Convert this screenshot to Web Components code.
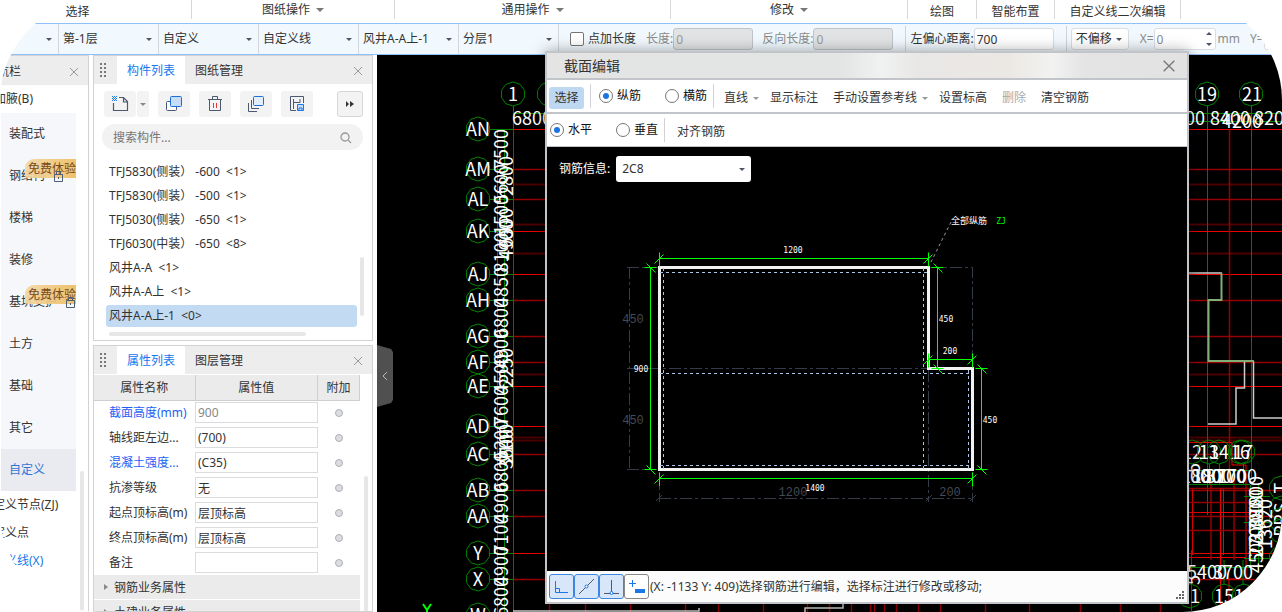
<!DOCTYPE html>
<html lang="zh-CN">
<head>
<meta charset="utf-8">
<meta name="viewport" content="width=device-width, initial-scale=1">
<title>截面编辑</title>
<style>
  html, body { margin: 0; height: 100%; background: #fff; }
  body { font: 12px/16px "Noto Sans", "Noto Sans CJK SC", sans-serif; color: #333; overflow: hidden; }
</style>
</head>
<body>
<cad-app></cad-app>
<script>
const BASE = `*{box-sizing:border-box} button,input,select{font:inherit;color:inherit;margin:0} button{border:0;background:none;padding:0} p,h2,ul{margin:0;padding:0;font:inherit;list-style:none}`;

function define(name, css, html, setup) {
  const template = document.createElement('template');
  template.innerHTML = `<style>${BASE}${css}</style>${typeof html === 'string' ? html : ''}`;
  customElements.define(name, class extends HTMLElement {
    constructor() {
      super();
      this.attachShadow({ mode: 'open' }).append(template.content.cloneNode(true));
    }
    connectedCallback() {
      if (this.ready) return;
      this.ready = true;
      if (typeof html === 'function') this.shadowRoot.innerHTML += html(this);
      if (setup) setup(this);
    }
  });
}

/* Small building blocks */
define('caret-down', `:host{display:inline-block;width:0;height:0;border:3px solid transparent;border-top-color:var(--caret,#4b5563);border-bottom:0;flex:none}
  :host([big]){border-width:4px;border-bottom:0;--caret:#777}`, '');

define('bar-line', `:host{display:block;width:1px;flex:none;background:#cfd3d8;align-self:stretch}`, '');

define('close-button', `:host{display:block;width:12px;height:12px;color:#999} button,svg{display:block;width:100%;height:100%}`,
  `<button type="button" aria-label="关闭"><svg viewBox="0 0 12 12" fill="none" stroke="currentColor"><path d="M2 2l8 8M10 2l-8 8"/></svg></button>`);

define('drop-field', `:host{display:flex;position:relative;align-items:center;min-width:0}
  select{appearance:none;border:0;background:none;outline:0;width:100%;height:100%;padding:0 12px 0 4px}
  caret-down{position:absolute;right:6px;pointer-events:none}`,
  host => `<select aria-label="${host.getAttribute('label')}"><option>${host.getAttribute('value')}</option></select><caret-down></caret-down>`);

define('text-field', `:host{display:flex;align-items:center;flex:none}
  label{white-space:nowrap} input{width:80px;height:22px;border:1px solid #d9dde2;border-radius:3px;background:#fff;padding:0 2px;outline:0}
  :host([off]){color:#8b8b8b} :host([off]) input{background:#e2e3e4;border-color:#bfc4cb;color:#999}
  :host([spin]) input{width:62px} .spin{display:none} :host([spin]){position:relative;color:#8b8b8b}
  :host([spin]) .spin{display:grid;gap:8px;position:absolute;right:4px}
  .up{transform:rotate(180deg)}`,
  host => `<label for="f">${host.getAttribute('label')}</label><input id="f" value="${host.getAttribute('value') || ''}" ${host.hasAttribute('off') ? 'disabled' : ''}><span class="spin"><caret-down class="up"></caret-down><caret-down></caret-down></span>`);

define('radio-item', `:host{display:block} label{display:flex;align-items:center;gap:4px;color:#111}
  input{appearance:none;width:14px;height:14px;border:1px solid #777;border-radius:50%;background:#fff;display:grid;place-items:center}
  input:checked::after{content:"";width:6px;height:6px;border-radius:50%;background:#1d74e0}`,
  host => `<label><input type="radio" ${host.hasAttribute('checked') ? 'checked' : ''}><span><slot></slot></span></label>`);

define('free-badge', `:host{display:block;width:51px;height:19px;padding:1px 0 0 3px;overflow:hidden;white-space:nowrap;border-radius:9px 0 0 4px;background:linear-gradient(90deg,#f4d7a4,#eebe63);color:#6e3d0c;line-height:17px;opacity:.93}`, '<slot></slot>');

define('lock-icon', `:host{display:block;width:9px;height:12px} svg{display:block}`,
  `<svg width="9" height="12" fill="none" stroke="#4e5d78"><path d="M.5 4.500h8v7h-8zM2.500 4V1.500h4V4"/><path d="M4.500 7v2"/></svg>`);

/* Ribbon captions */
define('ribbon-groups', `:host{display:grid;grid-template-columns:192fr 203fr 276fr 237fr 69fr 78fr 126fr 101fr;height:23px;background:#fff}
  div{display:flex;align-items:center;justify-content:center;gap:6px;height:19px;border-right:1px solid #d8d8d8;padding-top:4px;white-space:nowrap}
  div.menu{padding-top:0} div:first-of-type{padding-right:36px} div:last-child{border:0}`,
  `<div>选择</div><div class="menu">图纸操作<caret-down big></caret-down></div><div class="menu">通用操作<caret-down big></caret-down></div><div class="menu">修改<caret-down big></caret-down></div><div>绘图</div><div>智能布置</div><div>自定义线二次编辑</div><div></div>`);

define('option-bar', `:host{display:flex;align-items:center;height:32px;background:#f1f9fe;border:solid #8fc0f7;border-width:1px 0;overflow:hidden}
  .pick{width:100px;height:30px;flex:none;border-right:1px solid #d3d7dc} .pick:first-of-type{width:59px}
  label{display:flex;align-items:center;gap:4px;margin:0 10px 0 11px;flex:none}
  input{appearance:none;width:14px;height:14px;margin:0;border:1px solid #777;border-radius:2px;background:#fff}
  .gap{margin-right:9px} bar-line{height:26px;align-self:center;margin:0 4px 0 12px}
  .shift{width:58px;height:22px;flex:none;border:1px solid #d9dde2;border-radius:3px;background:#fff;margin-right:11px}
  .mm{color:#8b8b8b;margin:0 10px 0 2px}`,
  `<drop-field class="pick" label="工程" value=""></drop-field><drop-field class="pick" label="楼层" value="第-1层"></drop-field><drop-field class="pick" label="类别" value="自定义"></drop-field><drop-field class="pick" label="类型" value="自定义线"></drop-field><drop-field class="pick" label="构件" value="风井A-A上-1"></drop-field><drop-field class="pick" label="分层" value="分层1"></drop-field>
  <label><input type="checkbox">点加长度</label>
  <text-field class="gap" off label="长度:" value="0"></text-field><text-field off label="反向长度:" value="0"></text-field>
  <bar-line></bar-line><text-field label="左偏心距离:" value="700"></text-field>
  <bar-line></bar-line><drop-field class="shift" label="偏移" value="不偏移"></drop-field>
  <text-field spin label="X=" value="0"></text-field><span class="mm">mm</span><text-field spin label="Y=" value=""></text-field>`);

/* Module navigation, scrolled sideways under the window edge */
define('side-nav', `:host{display:block;width:89px;border-right:1px solid #d2d2d4;overflow:hidden;background:#fff;position:relative}
  .in{margin-left:-19px}
  header{display:flex;align-items:center;justify-content:space-between;height:30px;border-top:1px solid #d4d4d6;background:#ededee;padding:2px 8px 0 4px}
  .in>p{height:28px;line-height:28px;padding-left:13px}
  ul{margin-left:20px;width:75px;background:#f5f7fa}
  li{position:relative;height:42px;line-height:42px;padding-left:8px;white-space:nowrap;overflow:hidden}
  li.on{background:#e9ebf0} a{color:inherit;text-decoration:none} li.on a{color:#3375d6}
  free-badge{position:absolute;right:0;top:4px} lock-icon{position:absolute;top:15px;left:53px} .far{left:65px}
  .sub a{display:block;height:28px;line-height:28px;white-space:nowrap} .sub a.on{color:#1677e8}
  i{position:absolute;right:4px;bottom:0;width:4px;height:141px;border-radius:2px;background:#e7e7e8}`,
  `<div class="in"><header><span>导航栏</span><close-button></close-button></header><p>加腋(B)</p>
  <ul><li><a href="#">装配式</a></li><li><a href="#">钢结构</a><free-badge>免费体验</free-badge><lock-icon></lock-icon></li><li><a href="#">楼梯</a></li><li><a href="#">装修</a></li><li><a href="#">基坑支护</a><free-badge>免费体验</free-badge><lock-icon class="far"></lock-icon></li><li><a href="#">土方</a></li><li><a href="#">基础</a></li><li><a href="#">其它</a></li><li class="on"><a href="#">自定义</a></li></ul>
  <nav class="sub"><a href="#">自定义节点(ZJ)</a><a href="#">自定义点</a><a href="#" class="on">自定义线(X)</a></nav></div><i></i>`);

define('dock-panel', `:host{display:block;border:1px solid #d2d2d4;background:#fff;overflow:hidden;position:relative}
  header{display:flex;align-items:stretch;height:28px;background:#ededee}
  .grip{width:23px;display:grid;place-items:center;padding-right:6px}
  .tab{padding:1px 10px 0} .tab.on{background:#fff;color:#1677ee} close-button{margin:9px 8px 0 auto}`,
  host => `<header><span class="grip"><svg width="6" height="14" fill="#777"><path d="M0 0h2v2H0zM4 0h2v2H4zM0 4h2v2H0zM4 4h2v2H4zM0 8h2v2H0zM4 8h2v2H4zM0 12h2v2H0zM4 12h2v2H4z"/></svg></span><button class="tab on" type="button">${host.getAttribute('tab')}</button><button class="tab" type="button">${host.getAttribute('other')}</button><close-button></close-button></header><slot></slot>`);

define('component-list', `:host{display:block;position:relative;height:256px;padding:7px 9px 0 8px}
  .tools{display:flex;gap:9px;height:26px;padding-left:2px}
  .tools button{width:32px;border-radius:3px;background:#f3f3f4;display:grid;place-items:center}
  .pair{display:flex;gap:1px} .pair .drop{width:12px;--caret:#888} .tools .more{width:26px;margin-left:auto;border:1px solid #d8d8da}
  .find{display:flex;align-items:center;height:26px;margin-top:7px;border-radius:13px;background:#f2f2f3;padding:1px 11px 0}
  .find input{flex:1;min-width:0;border:0;outline:0;background:none;padding:0} .find input::placeholder{color:#757575}
  ul{margin:10px 6px 0 4px} li{height:24px;line-height:22px;padding:1px 3px;white-space:pre}
  li.on{height:22px;margin-top:1px;background:#c2daf2;border-radius:3px;padding:0 3px}
  .v,.h{position:absolute;background:#e7e7e8;border-radius:2px} .v{right:8px;top:173px;width:4px;height:59px} .h{left:15px;bottom:4px;width:197px;height:4px}`,
  `<div class="tools"><span class="pair"><button type="button" aria-label="新建"><svg width="18" height="18" fill="none" stroke="#4b5870" stroke-width="1.200"><path d="M8 2.500H12.500l4 4v9H2.500V8M12.500 3v4H16"/><path fill="#1b76e8" stroke="none" d="M1 1h1v1H1zM3 1h1v1H3zM5 1h1v1H5zM2 2h1v1H2zM4 2h1v1H4zM1 3h1v1H1zM3 3h1v1H3zM5 3h1v1H5zM2 4h1v1H2zM4 4h1v1H4zM1 5h1v1H1zM3 5h1v1H3zM5 5h1v1H5z"/></svg></button><button class="drop" type="button" aria-label="更多新建"><caret-down></caret-down></button></span>
  <button type="button" aria-label="复制"><svg width="18" height="18" stroke="#4b5870"><rect x="1.500" y="6.500" width="10" height="9" rx="1" fill="#fff"/><rect x="5.500" y="1.500" width="11" height="10" rx="1" fill="#c7dcf7" stroke="#1b6fd8"/></svg></button>
  <button type="button" aria-label="删除"><svg width="18" height="18" fill="none" stroke="#4b5870"><path d="M2 4.500h14M3.500 5v10.500h11V5M6.500 4V1.500h5V4"/><path stroke="#e33" d="M7.500 8v5M10.500 8v5"/></svg></button>
  <button type="button" aria-label="层间复制"><svg width="18" height="18" fill="none" stroke="#4b5870"><path d="M4.500 5v8.500H12M1.500 8v8.500H10"/><rect x="6.500" y="1.500" width="10" height="9" rx="1" stroke="#1b6fd8" fill="#e2eefc"/></svg></button>
  <button type="button" aria-label="存档"><svg width="18" height="18" fill="none" stroke="#4b5870"><path d="M8 15.500H2.500v-14h13V8M5.500 4v10M5.500 7.500H12V4"/><path fill="#c7dcf7" stroke="#1b76e8" d="M9.500 9.500h6v6h-6zM11 15v-2h3v2"/></svg></button>
  <button class="more" type="button" aria-label="展开"><svg width="8" height="6" fill="#333"><path d="M0 0l3 3-3 3zM4 0l4 3-4 3z"/></svg></button></div>
  <div class="find"><input aria-label="搜索构件" placeholder="搜索构件..."><svg width="12" height="12" fill="none" stroke="#999" stroke-width="1.300"><circle cx="5" cy="5" r="4"/><path d="M8 8l3 3"/></svg></div>
  <ul><li>TFJ5830(侧装） -600  &lt;1&gt;</li><li>TFJ5830(侧装） -500  &lt;1&gt;</li><li>TFJ5030(侧装） -650  &lt;1&gt;</li><li>TFJ6030(中装） -650  &lt;8&gt;</li><li>风井A-A  &lt;1&gt;</li><li>风井A-A上  &lt;1&gt;</li><li class="on">风井A-A上-1  &lt;0&gt;</li></ul><i class="v"></i><i class="h"></i>`);

const PROPS = [['截面高度(mm)', '900', 'blue', 'off'], ['轴线距左边...', '(700)'], ['混凝土强度...', '(C35)', 'blue'], ['抗渗等级', '无'], ['起点顶标高(m)', '层顶标高'], ['终点顶标高(m)', '层顶标高'], ['备注', '']];
define('property-table', `:host{display:block;position:relative;padding:1px 12px 0 0}
  table{width:100%;border-collapse:collapse;table-layout:fixed} col.n{width:101px} col.d{width:42px}
  th{height:25px;font-weight:400;background:#ebebec;border:solid #cfcfd1;border-width:0 1px 1px 0;padding:1px 0 0}
  td{height:25px;padding:0;white-space:nowrap} td:first-child{padding-left:15px}
  td input{display:block;width:123px;height:21px;border:1px solid #dcdcde;padding:0 2px;outline:0;background:#fff}
  .blue{color:#1d5ff5} .off{color:#888} b{display:block;width:8px;height:8px;margin:0 auto;border:1px solid #adb0b5;border-radius:50%;background:#dcdde0}
  .group{height:24px;line-height:23px;background:#ebebec;margin-bottom:1px;display:flex;align-items:center;gap:6px;padding-left:10px}
  .group::before{content:"";border:3px solid transparent;border-left:4px solid #888;border-right:0}
  i{position:absolute;right:4px;top:102px;bottom:0;width:4px;background:#e7e7e8;border-radius:2px}`,
  `<table><colgroup><col class="n"><col><col class="d"></colgroup><thead><tr><th>属性名称</th><th>属性值</th><th>附加</th></tr></thead><tbody>${PROPS.map((p, k) => `<tr><td class="${p[2] || ''}"><label for="p${k}">${p[0]}</label></td><td><input id="p${k}" class="${p[3] || ''}" value="${p[1]}"></td><td><b></b></td></tr>`).join('')}</tbody></table><div class="group">钢筋业务属性</div><div class="group">土建业务属性</div><i></i>`);

/* Floor plan behind the dialog */
function ring(x, y, r = 12) {
  const pts = [];
  for (let k = 0; k < 10; k++) pts.push([x + r * Math.sin(k * Math.PI / 5), y - r * Math.cos(k * Math.PI / 5)].map(v => v.toFixed(1)).join());
  return `<polygon points="${pts.join(' ')}" class="g"/>`;
}
const label = (x, y, t) => `<text x="${x}" y="${y + 7}">${t}</text>`;
const upright = (x, y, t) => `<text transform="translate(${x + 7} ${y}) rotate(-90)">${t}</text>`;
function plan() {
  const rows = [[129, 'AN', 3], [169, 'AM', 2], [199, 'AL', 2], [231, 'AK', 3], [274, 'AJ', 3], [300, 'AH', 2], [336, 'AG', 2], [362, 'AF', 2], [386, 'AE', 3], [426, 'AD', 3], [454, 'AC', 2], [490, 'AB', 2], [516, 'AA', 2], [553, 'Y', 3], [579, 'X', 2], [615, 'W', 2]];
  const spans = ['7500', '5600', '1500', '8100', '4850', '6800', '4900', '4500', '7600', '5200', '6800', '4900', '7100', '4900', '6800'];
  let s = '';
  for (const y of [184, 224, 253, 374, 437, 440]) s += `<path class="r1" d="M513 ${y}.5H1282"/>`;
  for (const [y, , k] of rows) s += `<path class="r${k}" d="M513 ${y}.5H1282"/><path class="g" d="M489 ${y}.5H513"/>`;
  s += '<path class="r3" d="M513.500 129V612"/><path class="g" d="M513.500 106V129M497.500 129V612M504.500 129V612M513 113.500H550M1188 113.500H1282M1188 121.500H1282M1207.500 105V129M1251.500 105V129"/>';
  s += '<path class="r3" d="M1207.500 129V515M1251.500 129V480"/><path class="r2" d="M1229.500 129V470"/>';
  for (const x of [549, 585, 630, 685, 718, 763, 807, 829, 851, 870, 874, 884, 896, 918, 940, 985, 1029, 1080, 1120, 1160]) s += `<path class="r2" d="M${x}.5 604V612"/>`;
  s += '<path class="w" d="M513 611H699V608M805 612V608H843V604"/>';
  rows.forEach(([y, t], k) => {
    s += ring(478, y) + label(478, y, t);
    if (k < spans.length) s += upright(501, (y + rows[k + 1][0]) / 2, spans[k]);
  });
  for (const [y, t] of [[176, '2800'], [228, '6500'], [240, '4900'], [368, '2250'], [444, '2100'], [449, '3600']]) s += upright(506, y, t);
  s += ring(513, 94) + label(513, 94, '1') + ring(549, 94) + label(532, 118, '6800');
  s += ring(1207, 94) + label(1207, 94, '19') + ring(1251, 94) + label(1252, 94, '21') + label(1185, 118, '8400') + label(1230, 118, '8400') + label(1242, 121, '4200') + label(1274, 118, '8200');
  s += '<path class="w" d="M1188 273H1222M1253.500 361V418H1282M1244.500 361V388H1236V424H1208"/><path fill="none" stroke="#7fae77" stroke-width="2" d="M1221.500 273V300H1208.500V361H1254"/>';
  /* Stair core detail */
  s += '<path class="r3" d="M1188 442.500H1232V465H1246V579H1229V612M1192.500 488V555M1220.500 488V612M1223.500 488V555M1188 512.500H1262M1188 553.500H1246M1188 557.500H1246M1191.500 550V612"/><path class="r2" d="M1188 488.500H1262M1188 502.500H1250M1188 530.500H1250M1211 480V560M1234 480V560"/><path class="g" d="M1188 470.500H1250M1188 484.500H1250M1250.500 485V570M1258.500 485V570M1244 496.500H1270M1244 522.500H1270M1244 558.500H1270M1224 560V585M1243 560V585M1188 567.500H1250M1209.500 464V485M1219.500 464V485M1243.500 464V485"/>';
  for (const [x, t] of [[1192, '12'], [1209, '13'], [1219, '14'], [1240, '16'], [1243, '17']]) s += ring(x, 452) + label(x, 452, t);
  for (const [x, t] of [[1190, '8100'], [1201, '1800'], [1212, '1800'], [1226, '3700'], [1237, '1700']]) s += label(x, 476, t);
  for (const [y, t] of [[488, 'T'], [508, 'S'], [520, 'R'], [531, 'P'], [558, 'N']]) s += ring(1281, y) + upright(1281, y, t);
  for (const [y, t] of [[496, '1800'], [509, '3800'], [523, '3700'], [537, '2700'], [553, '4502']]) s += upright(1256, y, t);
  s += upright(1265, 524, '13620') + upright(1193, 468, '5') + upright(1193, 580, '5');
  s += label(1207, 572, '5400') + label(1233, 572, '3700');
  for (const [x, t] of [[1190, '11'], [1224, '15'], [1244, '16']]) s += ring(x, 596) + label(x, 596, t);
  return `<path stroke="#0f0" stroke-width="2" fill="none" d="M423 604L427 610 431 604M427 609V612"/>` + s;
}
define('plan-canvas', `:host{display:block;position:relative;background:#000;overflow:hidden;min-width:0}
  svg{display:block;width:100%;height:100%} text{font:18px "Noto Sans CJK SC",sans-serif;fill:#fff;text-anchor:middle}
  .g{fill:none;stroke:#008400} .r1{stroke:#4d0000;stroke-width:2;fill:none} .r2{stroke:#960000;stroke-width:1.500;fill:none} .r3{stroke:#f00000;fill:none} .w{stroke:#ccc;stroke-width:1.500;fill:none}
  button{position:absolute;left:0;top:290px;width:16px;height:62px;background:#505050;clip-path:polygon(0 0,14px 4px,16px 7px,16px 55px,14px 58px,0 62px);display:grid;place-items:center}
  button svg{width:8px;height:10px}`,
  `<svg role="img" aria-label="平面图"><g transform="translate(-377 -55)">${plan()}</g></svg><button type="button" aria-label="收起"><svg fill="none" stroke="#bbb"><path d="M6 1L2 5l4 4"/></svg></button>`);

/* Section outline with its dimensions */
function dimension(x1, y1, x2, y2) {
  const flat = y1 === y2;
  const end = (x, y) => flat ? `M${x} ${y - 6}V${y + 8}M${x - 5} ${y + 5}L${x + 4} ${y - 4}` : `M${x - 6} ${y}H${x + 6}M${x - 4} ${y - 4}L${x + 5} ${y + 5}`;
  return `<path class="dim" d="M${x1} ${y1}L${x2} ${y2}${end(x1, y1)}${end(x2, y2)}"/>`;
}
define('section-drawing', `:host{display:block;position:relative;background:#000;overflow:hidden;min-height:0}
  svg{display:block;width:100%;height:100%} path{fill:none} .dim{stroke:#0f0} .axis{stroke:#363c47;stroke-dasharray:12 3 3 3} .bar{stroke:#a9c6ea;stroke-dasharray:3 3} .edge{stroke:#f2f2f2;stroke-width:3}
  text{font:8px "DejaVu Sans Mono","Noto Sans CJK SC",monospace;fill:#fff;text-anchor:middle} .dimtext{font:12px "Liberation Mono",monospace;fill:#434955}
  .leader{font-size:9px} .zj{fill:#0f0}
  .info{position:absolute;left:12px;top:9px;display:flex;align-items:center;gap:6px;color:#fff}
  drop-field{width:135px;height:26px;border-radius:3px;background:#fff;color:#333;padding-left:2px}`,
  `<svg role="img" aria-label="截面"><g transform="translate(-547 -147)">
  <path class="axis" d="M627 267.500H659M929 267.500H972.500V368M627 368.500H929M627 469.500H645M629.500 267V469M928.500 370V502M659.500 472V502M972.500 472V502M659 498.500H972M656 501l6-6M926 501l6-6M970 501l6-6"/>
  <text class="dimtext" x="633" y="323">450</text><text class="dimtext" x="633" y="424">450</text><text class="dimtext" x="793" y="496">1200</text><text class="dimtext" x="950" y="496">200</text>
  <path class="edge" d="M659.500 267.500H928.500V368.500H972.500V469.500H659.500z"/>
  <path class="bar" d="M660 272.500H929M663.500 268V469M923.500 268V469M660 373.500H972M660 465.500H972M968.500 370V469"/>
  ${dimension(659.5, 258.5, 928.5, 258.5)}${dimension(650.5, 267.5, 650.5, 469.5)}${dimension(937.5, 267.5, 937.5, 368.5)}${dimension(928.5, 359.5, 972.5, 359.5)}${dimension(981.5, 368.5, 981.5, 469.5)}${dimension(659.5, 478.5, 972.5, 478.5)}
  <path stroke="#999" stroke-dasharray="3 3" d="M951 222L931 262"/>
  <text x="793" y="253">1200</text><text x="641" y="372">900</text><text x="946" y="322">450</text><text x="950" y="354">200</text><text x="990" y="423">450</text><text x="815" y="491">1400</text><text class="leader" x="969" y="224">全部纵筋</text><text class="zj" x="1001" y="224">ZJ</text></g></svg>
  <div class="info"><span>钢筋信息:</span><drop-field label="钢筋信息" value="2C8"></drop-field></div>`);

define('section-dialog', `:host{display:flex;flex-direction:column;border:2px solid #c1c4c9;background:#fff;box-shadow:0 0 14px rgba(0,0,0,.35)}
  header{display:flex;align-items:center;justify-content:space-between;height:27px;padding:0 10px 0 17px;background:linear-gradient(90deg,#e4e4e5,#e3e4e4 46%,#f0f2f2 52%,#e9e7e6 58%,#ebe8e4 72%,#f2f2f1 79%,#e4e4e5 84%,#e2e2e3);border-bottom:2px solid #c1c4c9;flex:none}
  h2{font-size:14px;line-height:20px} header close-button{width:16px;height:16px;color:#777}
  .row{display:flex;align-items:center;height:34px;border-bottom:2px solid #c1c4c9;flex:none;white-space:nowrap;padding-left:2px}
  .row.two{border-width:1px;height:33px} .row button{padding-top:4px;height:24px} .row bar-line{margin:4px 0}
  .row button.on{width:35px;height:22px;background:#bfd8f2;border-radius:3px;padding:0;margin:3px 6px 0 0} radio-item{margin-left:8px} radio-item+radio-item{margin-left:24px} .row radio-item+bar-line{margin-left:6px}
  .cmd{margin-left:15px} .first{margin-left:10px} .drop{--caret:#999;display:flex;align-items:center;gap:5px} .drop+.cmd{margin-left:11px} .dim{color:#aaa}
  .two radio-item:first-child{margin-left:1px} .two .cmd{margin-left:12px}
  section-drawing{flex:1}
  footer{display:flex;align-items:center;height:31px;flex:none;background:#fcfcfc;padding-left:2px;position:relative}
  footer button{width:25px;height:25px;border:1px solid #3b86df;border-radius:3px;background:#d7e6f9;display:grid;place-items:center} footer button:nth-child(4){border-color:#888;background:#fff}
  footer svg{display:block} footer span{margin-left:1px;padding-top:1px} .grip{position:absolute;right:2px;bottom:2px}`,
  `<header><h2>截面编辑</h2><close-button></close-button></header>
  <div class="row"><button class="on" type="button">选择</button><bar-line></bar-line><radio-item checked>纵筋</radio-item><radio-item>横筋</radio-item><bar-line></bar-line><button class="cmd first drop" type="button">直线<caret-down></caret-down></button><button class="cmd" type="button">显示标注</button><button class="cmd drop" type="button">手动设置参考线<caret-down></caret-down></button><button class="cmd" type="button">设置标高</button><button class="cmd dim" type="button">删除</button><button class="cmd" type="button">清空钢筋</button></div>
  <div class="row two"><radio-item checked>水平</radio-item><radio-item>垂直</radio-item><bar-line></bar-line><button class="cmd" type="button">对齐钢筋</button></div>
  <section-drawing></section-drawing>
  <footer><button type="button" aria-label="正交"><svg width="17" height="17" fill="none" stroke="#1b76e8"><path d="M2.500 3v11.500H15M2.500 10.500h4v4"/></svg></button><button type="button" aria-label="中点"><svg width="17" height="17" fill="none" stroke="#4b5870"><path d="M1 16L16 1"/><circle cx="8.500" cy="8.500" r="1.500" fill="#fff" stroke="#1b76e8"/></svg></button><button type="button" aria-label="垂点"><svg width="17" height="17" fill="none" stroke="#4b5870"><path d="M1 15.500h15M8.500 2v13"/><circle cx="8.500" cy="15" r="1.500" fill="#fff" stroke="#1b76e8"/></svg></button><button type="button" aria-label="动态输入"><svg width="19" height="17" fill="none" stroke="#1b76e8"><path d="M2 5.500h7M5.500 2v7"/><path fill="#1b76e8" stroke="none" d="M8 11h10v4H8z"/></svg></button><span>(X: -1133 Y: 409)选择钢筋进行编辑，选择标注进行修改或移动;</span>
  <svg class="grip" width="9" height="9" fill="#666"><path d="M6 0h2v2H6zM3 3h2v2H3zM6 3h2v2H6zM0 6h2v2H0zM3 6h2v2H3zM6 6h2v2H6z"/></svg></footer>`);

define('cad-app', `:host{display:flex;flex-direction:column;position:relative;height:100vh;overflow:hidden;border-radius:100px;background:#fff}
  ribbon-groups,option-bar{flex:none}
  main{flex:1;display:grid;grid-template-columns:89px 280px 1fr;column-gap:4px;min-height:0}
  .dock{display:flex;flex-direction:column;gap:4px;min-height:0} .dock>:last-child{flex:1;min-height:0}
  .dock>*{flex:none}
  section-dialog{position:absolute;left:545px;right:93px;top:51px;bottom:8px}`,
  `<ribbon-groups></ribbon-groups><option-bar></option-bar>
  <main><side-nav></side-nav><div class="dock"><dock-panel tab="构件列表" other="图纸管理"><component-list></component-list></dock-panel><dock-panel tab="属性列表" other="图层管理"><property-table></property-table></dock-panel></div><plan-canvas></plan-canvas></main>
  <section-dialog role="dialog" aria-label="截面编辑"></section-dialog>`);
</script>
</body>
</html>
